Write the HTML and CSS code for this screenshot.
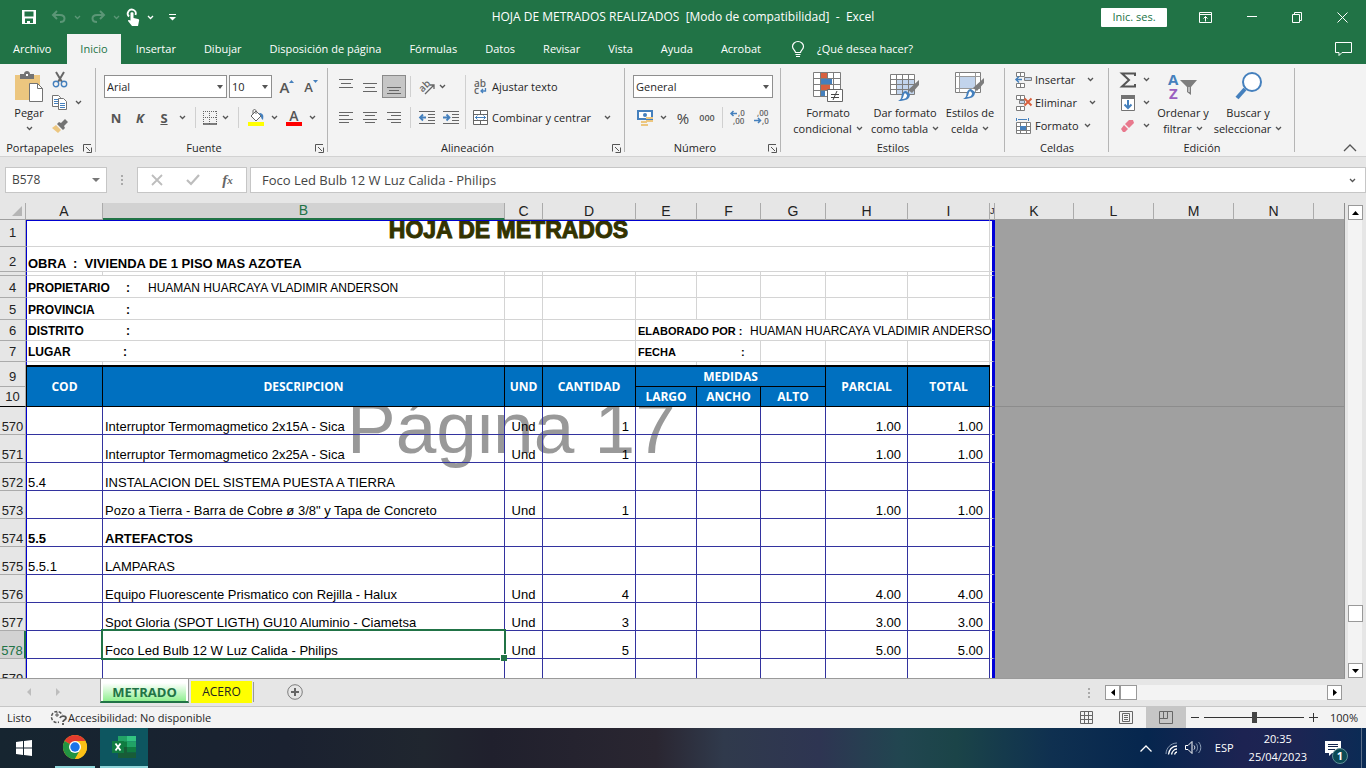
FILE: index.html
```html
<!DOCTYPE html>
<html lang="es">
<head>
<meta charset="utf-8">
<title>HOJA DE METRADOS REALIZADOS - Excel</title>
<link rel="stylesheet" href="styles.css">
</head>
<body>
<svg class="defs" aria-hidden="true">
  <symbol id="chev" viewBox="0 0 7 5"><path d="M1 1l2.500 2.500L6 1" fill="none" stroke="currentColor" stroke-width="1.300"/></symbol>
  <symbol id="launch" viewBox="0 0 9 9"><path d="M.5 7.500V.5H8M3 3l4 4M8.500 3.500v5H3.500" fill="none" stroke="#555"/></symbol>
  <symbol id="brush" viewBox="0 0 22 22"><path d="M22 0v5l-7 8-4-3z" fill="#7d7d7d"/><path d="M9 11l4 3c0 5-4 7-12 7 4-2 3-4 4-7 1-2 2-3 4-3z" fill="#4580bd"/><path d="M8 13c-2 2-1 4-3 6 3 0 5-1 5-4z" fill="#fff"/></symbol>
</svg>
<div class="app">
  <header class="titlebar">
    <div class="quick">
      <button aria-label="Guardar"><svg width="14" height="14" viewBox="0 0 14 14"><path d="M0 0h14v14H0z" fill="#fff"/><path d="M2.500 1.500h9v5h-9zM3 8.500h8V13H8v-2H5v2H3z" fill="#217346"/></svg></button>
      <button class="dim undo" aria-label="Deshacer"><svg width="16" height="14" viewBox="0 0 16 14"><path d="M6 1L2 5l4 4M2 5h7c6 0 6 7 0 7" fill="none" stroke="currentColor" stroke-width="2"/></svg></button>
      <svg class="ch dim"><use href="#chev"/></svg>
      <button class="dim next" aria-label="Rehacer"><svg width="16" height="14" viewBox="0 0 16 14"><path d="M10 1l4 4-4 4M14 5H7c-6 0-6 7 0 7" fill="none" stroke="currentColor" stroke-width="2"/></svg></button>
      <svg class="ch dim"><use href="#chev"/></svg>
      <button aria-label="Modo táctil"><svg width="13" height="17" viewBox="0 0 13 17"><path d="M2 7.500A4 4 0 1 1 8.500 6" fill="none" stroke="#fff" stroke-width="1.800"/><path d="M3.500 4c0-1 3-1 3 0v5l4.500 1c1 0 1.500 1 1 2l-1 5H5L1 12c0-1 1-1.500 2.500-.5z" fill="#fff"/></svg></button>
      <svg class="ch"><use href="#chev"/></svg>
      <button class="undo" aria-label="Personalizar"><svg width="7" height="7" viewBox="0 0 7 7"><path d="M0 .5h7" stroke="#fff"/><path d="M0 3h7L3.500 6.500z" fill="#fff"/></svg></button>
    </div>
    <h1>HOJA DE METRADOS REALIZADOS&nbsp; [Modo de compatibilidad]&nbsp; -&nbsp; Excel</h1>
    <div class="window">
      <button class="login">Inic. ses.</button>
      <button aria-label="Opciones de cinta"><svg width="13" height="11" viewBox="0 0 13 11"><path d="M.5.5h12v10H.5zM.5 2.500h12M6.500 9.500V4.500M4.500 6.500l2-2 2 2" fill="none" stroke="#fff"/></svg></button>
      <button aria-label="Minimizar"><svg width="10" height="11" viewBox="0 0 10 11"><path d="M0 4.500h10" stroke="#fff"/></svg></button>
      <button aria-label="Restaurar"><svg width="10" height="11" viewBox="0 0 10 11"><path d="M.5 2.500h7v8h-7zM2.500 2.500v-2h7v8h-2" fill="none" stroke="#fff"/></svg></button>
      <button aria-label="Cerrar"><svg width="11" height="11" viewBox="0 0 11 11"><path d="M.5.5l10 10M10.500.5l-10 10" stroke="#fff"/></svg></button>
    </div>
  </header>

  <nav class="tabs">
    <button>Archivo</button><button class="on">Inicio</button><button>Insertar</button><button>Dibujar</button><button>Disposición de página</button><button>Fórmulas</button><button>Datos</button><button>Revisar</button><button>Vista</button><button>Ayuda</button><button>Acrobat</button>
    <button class="tell"><svg width="12" height="17" viewBox="0 0 12 17"><path d="M3.500 11.500c0-2-3-3-3-6a5.500 5 0 0 1 11 0c0 3-3 4-3 6zM3.500 13.500h5M4 15.500h4" fill="none" stroke="#fff" stroke-width="1.200"/></svg>¿Qué desea hacer?</button>
    <button class="comment" aria-label="Comentarios"><svg width="17" height="15" viewBox="0 0 17 15"><path d="M.5.500h16v10H7l-3 3v-3H.5z" fill="none" stroke="#fff"/></svg></button>
  </nav>

  <section class="ribbon">
    <div class="group g-clip">
      <div class="body">
        <button class="big paste"><svg width="30" height="32" viewBox="0 0 30 32"><path d="M1 4h25v25H1z" fill="#ecc67f"/><path d="M6 3h4c0-4 6-4 6 0h4v5H6z" fill="#737373"/><path d="M12 3h2v2h-2z" fill="#fff"/><path d="M15.500 12.500h8l5 5v13h-13z" fill="#fff" stroke="#737373"/><path d="M23.500 12.500v5h5" fill="none" stroke="#737373"/></svg><span>Pegar</span><svg class="ch"><use href="#chev"/></svg></button>
        <div class="stack">
          <button class="line" aria-label="Cortar"><svg width="16" height="16" viewBox="0 0 16 16"><path d="M4 0l6 10M12 0L6 10" stroke="#666" stroke-width="2"/><circle cx="4" cy="12" r="2.700" fill="none" stroke="#4580bd" stroke-width="1.400"/><circle cx="12" cy="12" r="2.700" fill="none" stroke="#4580bd" stroke-width="1.400"/></svg></button>
          <button class="line" aria-label="Copiar"><svg width="16" height="16" viewBox="0 0 16 16"><path d="M.5.500h6l2 2v9h-8z" fill="#fff" stroke="#737373"/><path d="M2 4.500h4M2 6.500h4M2 8.500h4" stroke="#4580bd"/><path d="M6.500 3.500h5l3 3v8h-8z" fill="#fff" stroke="#737373"/><path d="M8 8.500h5M8 10.500h5M8 12.500h5" stroke="#4580bd"/></svg><svg class="ch"><use href="#chev"/></svg></button>
          <button class="line" aria-label="Copiar formato"><svg width="16" height="14" viewBox="0 0 16 14"><path d="M13 0l3 3-4 4 1 2-2 2-6-6 2-2 2 1z" fill="#737373"/><path d="M4 6l5 5-3 3-6-5z" fill="#ecc67f"/></svg></button>
        </div>
      </div>
      <div class="cap"><span>Portapapeles</span><svg class="ln"><use href="#launch"/></svg></div>
    </div>

    <div class="group g-font">
      <div class="rows">
        <div class="row">
          <label class="combo c-face"><select aria-label="Fuente"><option>Arial</option></select></label>
          <label class="combo c-size"><select aria-label="Tamaño"><option>10</option></select></label>
          <button class="b24 gl" aria-label="Aumentar"><span class="a16">A</span><svg class="tri" viewBox="0 0 5 3"><path d="M0 3h5L2.500 0z" fill="#4580bd"/></svg></button>
          <button class="b24 gl" aria-label="Disminuir"><span class="a13">A</span><svg class="tri" viewBox="0 0 5 3"><path d="M0 0h5L2.500 3z" fill="#4580bd"/></svg></button>
        </div>
        <div class="row">
          <button class="b24 bold">N</button><button class="b24 bold ital">K</button><button class="b24 bold und">S</button><svg class="ch wide"><use href="#chev"/></svg>
          <i class="sep"></i>
          <button class="b18" aria-label="Bordes"><svg width="14" height="14" viewBox="0 0 14 14"><path d="M0 .5h14M0 6.500h14M.5 0v13M6.500 0v13M13.500 0v13" stroke="#666" stroke-dasharray="1 1"/><path d="M0 13h14" stroke="#555" stroke-width="1.500"/></svg></button><svg class="ch wide"><use href="#chev"/></svg>
          <i class="sep"></i>
          <button class="b24" aria-label="Relleno"><svg width="17" height="17" viewBox="0 0 17 17"><path d="M3 7l5-5 5 5-5 5z" fill="#fff" stroke="#666"/><path d="M5 5V2c0-2 3-2 3 0v3" fill="none" stroke="#666"/><path d="M11 4c4 0 5 2 4 7-2-1-2-3-2-4z" fill="#4580bd"/><path d="M0 13h16v4H0z" fill="#ff0"/></svg></button><svg class="ch wide"><use href="#chev"/></svg>
          <button class="b24 fontcolor" aria-label="Color de fuente">A</button><svg class="ch wide"><use href="#chev"/></svg>
        </div>
      </div>
      <div class="cap"><span>Fuente</span><svg class="ln"><use href="#launch"/></svg></div>
    </div>

    <div class="group g-align">
      <div class="body">
        <div class="rows">
          <div class="row">
            <button class="b24" aria-label="Arriba"><svg width="14" height="16" viewBox="0 0 14 16"><path d="M0 .500h14M2 4.500h10M0 8.500h14" stroke="#666"/></svg></button>
            <button class="b24" aria-label="Medio"><svg width="14" height="16" viewBox="0 0 14 16"><path d="M0 4.500h14M2 8.500h10M0 12.500h14" stroke="#666"/></svg></button>
            <button class="b24 sel" aria-label="Abajo"><svg width="14" height="16" viewBox="0 0 14 16"><path d="M0 8.500h14M2 11.500h10M0 14.500h14" stroke="#666"/></svg></button>
            <i class="sep narrow"></i>
            <button class="b24" aria-label="Orientación"><svg width="16" height="16" viewBox="0 0 16 16"><text x="0" y="11" transform="rotate(-45 5 8)" class="ic ic10">ab</text><path d="M6 15L15 6M11 6h4v4" fill="none" stroke="#666" stroke-width="1.300"/></svg></button><svg class="ch"><use href="#chev"/></svg>
          </div>
          <div class="row">
            <button class="b24" aria-label="Izquierda"><svg width="14" height="12" viewBox="0 0 14 12"><path d="M0 .5h14M0 3.500h10M0 7.500h14M0 10.500h10" stroke="#666"/></svg></button>
            <button class="b24" aria-label="Centro"><svg width="14" height="12" viewBox="0 0 14 12"><path d="M0 .5h14M2 3.500h10M0 7.500h14M2 10.500h10" stroke="#666"/></svg></button>
            <button class="b24" aria-label="Derecha"><svg width="14" height="12" viewBox="0 0 14 12"><path d="M0 .5h14M4 3.500h10M0 7.500h14M4 10.500h10" stroke="#666"/></svg></button>
            <i class="sep narrow"></i>
            <button class="b24" aria-label="Disminuir sangría"><svg width="16" height="13" viewBox="0 0 16 13"><path d="M0 .5h16M9 3.500h7M9 6.500h7M9 9.500h7M0 12.500h16" stroke="#666"/><path d="M7 6.500H1M4 3.500l-3 3 3 3" fill="none" stroke="#4580bd" stroke-width="1.800"/></svg></button>
            <button class="b24" aria-label="Aumentar sangría"><svg width="16" height="13" viewBox="0 0 16 13"><path d="M0 .5h16M9 3.500h7M9 6.500h7M9 9.500h7M0 12.500h16" stroke="#666"/><path d="M0 6.500h6M3.500 3.500l3 3-3 3" fill="none" stroke="#4580bd" stroke-width="1.800"/></svg></button>
          </div>
        </div>
        <i class="sep tall"></i>
        <div class="rows">
          <div class="row"><button class="txt"><svg width="15" height="16" viewBox="-1 0 15 16"><text x="0" y="8" class="ic ic10">ab</text><text x="0" y="15" class="ic ic10">c</text><path d="M11.500 9v3H7M9 10l-2 2 2 2" fill="none" stroke="#4580bd" stroke-width="1.300"/></svg>Ajustar texto</button></div>
          <div class="row"><button class="txt"><svg width="15" height="15" viewBox="0 0 15 15"><path d="M.5.5h14v14H.5zM.5 4.500h14M.5 10.500h14M7.500.5v4M7.500 10.500v4" fill="#fff" stroke="#666"/><path d="M2 7.500h11M4.500 5.500l-2 2 2 2M10.500 5.500l2 2-2 2" fill="none" stroke="#4580bd"/></svg>Combinar y centrar</button><svg class="ch far"><use href="#chev"/></svg></div>
        </div>
      </div>
      <div class="cap"><span>Alineación</span><svg class="ln"><use href="#launch"/></svg></div>
    </div>

    <div class="group g-num">
      <div class="rows">
        <div class="row"><label class="combo c-num"><select aria-label="Formato de número"><option>General</option></select></label></div>
        <div class="row">
          <button class="b24" aria-label="Contabilidad"><svg width="16" height="16" viewBox="0 0 16 16"><path d="M1 1h14v8H1z" fill="#fff" stroke="#4580bd" stroke-width="2"/><circle cx="8" cy="5" r="2" fill="#4580bd"/><path d="M9 7h7v2H9zM9 10h7v2H9zM4 11h6v2H4zM4 14h7v2H4z" fill="#ecc67f"/></svg></button><svg class="ch wide"><use href="#chev"/></svg>
          <button class="b24 pct">%</button><button class="b24 mil">000</button>
          <i class="sep tight"></i>
          <button class="b24" aria-label="Aumentar decimales"><svg width="16" height="15" viewBox="0 0 16 15"><text x="8" y="6" class="ic ic8">,0</text><text x="3" y="14" class="ic ic8">,00</text><path d="M7 3.500H1M3.500 1L1 3.500 3.500 6" fill="none" stroke="#4580bd" stroke-width="1.500"/></svg></button>
          <button class="b24" aria-label="Disminuir decimales"><svg width="16" height="15" viewBox="0 0 16 15"><text x="3" y="6" class="ic ic8">,00</text><text x="8" y="14" class="ic ic8">,0</text><path d="M0 10.500h6M4 8l2.500 2.500L4 13" fill="none" stroke="#4580bd" stroke-width="1.500"/></svg></button>
        </div>
      </div>
      <div class="cap"><span>Número</span><svg class="ln"><use href="#launch"/></svg></div>
    </div>

    <div class="group g-style">
      <div class="body">
        <button class="big"><svg width="30" height="32" viewBox="0 0 30 32"><path d="M.5 1.500h27v24H.5z" fill="#fff"/><path d="M8 2h6v5H8zM8 14h9v5H8z" fill="#d8603f"/><path d="M8 8h11v5H8zM8 20h4v5H8z" fill="#4580bd"/><path d="M.5 1.500h27v24H.5zM.5 7.500h27M.5 13.500h27M.5 19.500h27M7.500 1.500v24M14.500 1.500v6M20.500 1.500v24" fill="none" stroke="#7d7d7d"/><path d="M14.500 18.500h15v12h-15z" fill="#fff" stroke="#666"/><path d="M18 23.500h8M18 26.500h8M24 20l-4 9" stroke="#444" fill="none"/></svg><span>Formato<br>condicional<svg class="ch"><use href="#chev"/></svg></span></button>
        <button class="big b-tab"><svg width="30" height="32" viewBox="0 0 30 32"><path d="M.5 3.500h24v20H.5z" fill="#fff"/><path d="M7 9h17v14H7z" fill="#c2d4ec"/><path d="M.5 3.500h24v20H.5zM.5 8.500h24M.5 13.500h24M.5 18.500h24M6.500 3.500v20M12.500 3.500v20M18.500 3.500v20" fill="none" stroke="#7d7d7d"/><use href="#brush" x="7" y="9" width="22" height="22"/></svg><span>Dar formato<br>como tabla<svg class="ch"><use href="#chev"/></svg></span></button>
        <button class="big b-cell"><svg width="30" height="32" viewBox="0 0 30 32"><path d="M.5 1.500h25v20H.5z" fill="#fff" stroke="#7d7d7d"/><path d="M5 6h15v11H5z" fill="#c2d4ec"/><path d="M.5 5.500h25M.5 17.500h25M4.500 1.500v20M20.500 1.500v20" stroke="#999"/><use href="#brush" x="7" y="7" width="22" height="22"/></svg><span>Estilos de<br>celda<svg class="ch"><use href="#chev"/></svg></span></button>
      </div>
      <div class="cap"><span>Estilos</span></div>
    </div>

    <div class="group g-cells">
      <div class="stack">
        <button class="line"><svg width="16" height="16" viewBox="0 0 16 16"><path d="M.5.5h8v4h-8zM4.500.5v4M.5 11.500h8v4h-8zM4.500 11.500v4" fill="#fff" stroke="#7d7d7d"/><path d="M8.500 5.500h7v3h-7z" fill="#c2d4ec" stroke="#7d7d7d"/><path d="M6 7.500H0M3 4.500l-3 3 3 3" fill="none" stroke="#4580bd" stroke-width="1.500"/></svg><span>Insertar</span><svg class="ch"><use href="#chev"/></svg></button>
        <button class="line"><svg width="16" height="16" viewBox="0 0 16 16"><path d="M.5.5h8v4h-8zM4.500.5v4M.5 11.500h8v4h-8zM4.500 11.500v4" fill="#fff" stroke="#7d7d7d"/><path d="M3.500 5.500h5v3h-5z" fill="#c2d4ec" stroke="#7d7d7d"/><path d="M8.500 3.500l7 7M15.500 3.500l-7 7" stroke="#d8603f" stroke-width="2"/></svg><span>Eliminar</span><svg class="ch"><use href="#chev"/></svg></button>
        <button class="line close"><svg width="16" height="16" viewBox="0 0 16 16"><path d="M.5 0v3M12.500 0v3M2 1.500h9" stroke="#4580bd"/><path d="M.5 4.500h14v11H.5zM.5 8.500h14M.5 12.500h14M4.500 4.500v11M10.500 4.500v11" fill="#fff" stroke="#7d7d7d"/><path d="M4 8h6v4H4z" fill="#4580bd"/></svg><span>Formato</span><svg class="ch"><use href="#chev"/></svg></button>
      </div>
      <div class="cap"><span>Celdas</span></div>
    </div>

    <div class="group g-edit">
      <div class="body">
        <div class="stack">
          <button class="line" aria-label="Autosuma"><svg width="16" height="16" viewBox="0 0 16 16"><path d="M15 4V1.500H2L9 8l-7 6.500h13V12" fill="none" stroke="#555" stroke-width="2"/></svg><svg class="ch"><use href="#chev"/></svg></button>
          <button class="line" aria-label="Rellenar"><svg width="16" height="16" viewBox="0 0 16 16"><path d="M1.500.5h13v15h-13z" fill="#fff" stroke="#737373"/><path d="M1 0h14v4H1z" fill="#737373"/><path d="M8 5v8M4.500 9.500L8 13l3.500-3.500" fill="none" stroke="#4580bd" stroke-width="2"/></svg><svg class="ch"><use href="#chev"/></svg></button>
          <button class="line" aria-label="Borrar"><svg width="16" height="12" viewBox="0 0 16 12"><path d="M9 0h4l1 3-5 5-4-4z" fill="#e8798d"/><path d="M4 5l4 4-3 3H3L1 9z" fill="#e8798d"/></svg><svg class="ch"><use href="#chev"/></svg></button>
        </div>
        <button class="big b-sort"><svg width="30" height="32" viewBox="0 0 30 32"><text x="0" y="14" class="ic az blue">A</text><text x="1" y="28" class="ic az violet">Z</text><path d="M12 9h17l-6 7v8l-4-3v-5z" fill="#7d7d7d"/><path d="M21 16v5" stroke="#fff"/></svg><span>Ordenar y<br>filtrar<svg class="ch"><use href="#chev"/></svg></span></button>
        <button class="big b-find"><svg width="30" height="32" viewBox="0 0 30 32"><circle cx="19" cy="11" r="9" fill="#fff" stroke="#4580bd" stroke-width="2"/><path d="M12 18l-8 9" stroke="#4580bd" stroke-width="4"/></svg><span>Buscar y<br>seleccionar<svg class="ch"><use href="#chev"/></svg></span></button>
      </div>
      <div class="cap"><span>Edición</span></div>
    </div>
    <button class="collapse" aria-label="Contraer"><svg width="14" height="8" viewBox="0 0 14 8"><path d="M1 7l6-6 6 6" fill="none" stroke="#555" stroke-width="1.300"/></svg></button>
  </section>

  <section class="formula">
    <label class="namebox"><input value="B578" aria-label="Cuadro de nombres"></label>
    <i class="dots"></i>
    <div class="fx">
      <button aria-label="Cancelar"><svg width="12" height="12" viewBox="0 0 12 12"><path d="M1 1l10 10M11 1L1 11" stroke="#bdbdbd" stroke-width="1.800"/></svg></button>
      <button aria-label="Aceptar"><svg width="14" height="12" viewBox="0 0 14 12"><path d="M1 6l4 4 8-9" fill="none" stroke="#bdbdbd" stroke-width="2.200"/></svg></button>
      <button class="fn">f<small>x</small></button>
    </div>
    <label class="entry"><input value="Foco Led Bulb 12 W Luz Calida - Philips" aria-label="Fórmula"><svg class="ch"><use href="#chev"/></svg></label>
  </section>

  <main class="work">
    <div class="sheet">
      <div class="watermark">Página 17</div>
      <table>
        <colgroup><col class="k0"><col class="kA"><col class="kB"><col class="kC"><col class="kD"><col class="kE"><col class="kF"><col class="kG"><col class="kH"><col class="kH"><col class="kJ"><col class="kK"><col class="kL"><col class="kL"><col class="kL"><col></colgroup>
        <thead><tr class="letters"><th class="corner"></th><th>A</th><th class="cur">B</th><th>C</th><th>D</th><th>E</th><th>F</th><th>G</th><th>H</th><th>I</th><th class="j">J</th><th>K</th><th>L</th><th>M</th><th>N</th><th class="last"></th></tr></thead>
        <tbody class="top">
          <tr class="h27 first"><th>1</th><td colspan="9" class="title">HOJA DE METRADOS</td><td></td><td class="out" colspan="5"></td></tr>
          <tr class="h25"><th>2</th><td colspan="9" class="b obra">OBRA &nbsp;:&nbsp; VIVIENDA DE 1 PISO MAS AZOTEA</td><td></td><td class="out" colspan="5"></td></tr>
          <tr class="h4"><th></th><td></td><td></td><td></td><td></td><td></td><td></td><td></td><td></td><td></td><td></td><td class="out" colspan="5"></td></tr>
          <tr class="h22"><th>4</th><td colspan="2"><div class="field"><b>PROPIETARIO</b><b>:</b><span>HUAMAN HUARCAYA VLADIMIR ANDERSON</span></div></td><td></td><td></td><td></td><td></td><td></td><td></td><td></td><td></td><td class="out" colspan="5"></td></tr>
          <tr class="h22"><th>5</th><td colspan="2"><div class="field"><b>PROVINCIA</b><b>:</b></div></td><td></td><td></td><td></td><td></td><td></td><td></td><td></td><td></td><td class="out" colspan="5"></td></tr>
          <tr class="h21"><th>6</th><td colspan="2"><div class="field"><b>DISTRITO</b><b>:</b></div></td><td></td><td></td><td colspan="6"><div class="made"><b>ELABORADO POR :</b><span>HUAMAN HUARCAYA VLADIMIR ANDERSON</span></div></td><td class="out" colspan="5"></td></tr>
          <tr class="h21"><th>7</th><td colspan="2"><div class="field near"><b>LUGAR</b><b>:</b></div></td><td></td><td></td><td colspan="2"><div class="made"><b>FECHA</b><b>:</b></div></td><td></td><td></td><td></td><td></td><td class="out" colspan="5"></td></tr>
          <tr class="h3"><th></th><td></td><td></td><td></td><td></td><td></td><td></td><td></td><td></td><td></td><td></td><td class="out" colspan="5"></td></tr>
          <tr class="h22 head r9"><th>9</th><td rowspan="2">COD</td><td rowspan="2">DESCRIPCION</td><td rowspan="2">UND</td><td rowspan="2">CANTIDAD</td><td colspan="3" class="med">MEDIDAS</td><td rowspan="2">PARCIAL</td><td rowspan="2">TOTAL</td><td class="plain"></td><td class="out" colspan="5"></td></tr>
          <tr class="h20 head r10"><th>10</th><td>LARGO</td><td>ANCHO</td><td>ALTO</td><td class="plain"></td><td class="out" colspan="5"></td></tr>
        </tbody>
        <tbody class="data">
          <tr><th>570</th><td></td><td>Interruptor Termomagmetico 2x15A - Sica</td><td>Und</td><td>1</td><td></td><td></td><td></td><td>1.00</td><td>1.00</td><td></td><td class="out" colspan="5"></td></tr>
          <tr><th>571</th><td></td><td>Interruptor Termomagmetico 2x25A - Sica</td><td>Und</td><td>1</td><td></td><td></td><td></td><td>1.00</td><td>1.00</td><td></td><td class="out" colspan="5"></td></tr>
          <tr><th>572</th><td>5.4</td><td>INSTALACION DEL SISTEMA PUESTA A TIERRA</td><td></td><td></td><td></td><td></td><td></td><td></td><td></td><td></td><td class="out" colspan="5"></td></tr>
          <tr><th>573</th><td></td><td>Pozo a Tierra - Barra de Cobre ø 3/8" y Tapa de Concreto</td><td>Und</td><td>1</td><td></td><td></td><td></td><td>1.00</td><td>1.00</td><td></td><td class="out" colspan="5"></td></tr>
          <tr class="b"><th>574</th><td>5.5</td><td>ARTEFACTOS</td><td></td><td></td><td></td><td></td><td></td><td></td><td></td><td></td><td class="out" colspan="5"></td></tr>
          <tr><th>575</th><td>5.5.1</td><td>LAMPARAS</td><td></td><td></td><td></td><td></td><td></td><td></td><td></td><td></td><td class="out" colspan="5"></td></tr>
          <tr><th>576</th><td></td><td>Equipo Fluorescente Prismatico con Rejilla - Halux</td><td>Und</td><td>4</td><td></td><td></td><td></td><td>4.00</td><td>4.00</td><td></td><td class="out" colspan="5"></td></tr>
          <tr><th>577</th><td></td><td>Spot Gloria (SPOT LIGTH) GU10 Aluminio - Ciametsa</td><td>Und</td><td>3</td><td></td><td></td><td></td><td>3.00</td><td>3.00</td><td></td><td class="out" colspan="5"></td></tr>
          <tr class="active"><th>578</th><td></td><td class="cell">Foco Led Bulb 12 W Luz Calida - Philips</td><td>Und</td><td>5</td><td></td><td></td><td></td><td>5.00</td><td>5.00</td><td></td><td class="out" colspan="5"></td></tr>
          <tr><th>579</th><td></td><td></td><td></td><td></td><td></td><td></td><td></td><td></td><td></td><td></td><td class="out" colspan="5"></td></tr>
        </tbody>
      </table>
    </div>
    <div class="vscroll">
      <button aria-label="Subir"><svg width="7" height="4" viewBox="0 0 7 4"><path d="M0 4h7L3.500 0z"/></svg></button>
      <div class="track"><i class="thumb"></i></div>
      <button aria-label="Bajar"><svg width="7" height="4" viewBox="0 0 7 4"><path d="M0 0h7L3.500 4z"/></svg></button>
    </div>
  </main>

  <div class="sheets">
    <div class="arrows"><svg width="4" height="8" viewBox="0 0 4 8"><path d="M4 0v8L0 4z" fill="#bdbdbd"/></svg><svg width="4" height="8" viewBox="0 0 4 8"><path d="M0 0v8l4-4z" fill="#bdbdbd"/></svg></div>
    <button class="tab-on"><span>METRADO</span></button>
    <button class="tab-y">ACERO</button>
    <i class="bar"></i>
    <button class="add" aria-label="Hoja nueva"><svg width="16" height="16" viewBox="0 0 16 16"><circle cx="8" cy="8" r="7.300" fill="none" stroke="#7d7d7d"/><path d="M8 4v8M4 8h8" stroke="#666" stroke-width="2"/></svg></button>
    <i class="dots push"></i>
    <div class="hscroll">
      <button aria-label="Izquierda"><svg width="4" height="7" viewBox="0 0 4 7"><path d="M4 0v7L0 3.500z"/></svg></button><i class="thumb"></i><span class="track"></span><button aria-label="Derecha"><svg width="4" height="7" viewBox="0 0 4 7"><path d="M0 0v7l4-3.500z"/></svg></button>
    </div>
  </div>

  <footer class="status">
    <span class="ready">Listo</span>
    <button class="acc"><svg width="17" height="15" viewBox="0 0 17 15"><circle cx="7" cy="7" r="5.500" fill="none" stroke="#555" stroke-width="1.500" stroke-dasharray="3 1.500"/><path d="M7 2v5M5 5h4" stroke="#555"/><path d="M9 5h8v10H9z" fill="#f3f3f3"/><path d="M10 8c1-3 6-2 6 0s-3 2-3 4M13 13v2" fill="none" stroke="#555" stroke-width="1.800"/></svg>Accesibilidad: No disponible</button>
    <div class="views">
      <button aria-label="Normal"><svg width="13" height="13" viewBox="0 0 13 13"><path d="M.5.5h12v12H.5zM.5 4.500h12M.5 8.500h12M4.500.5v12M8.500.5v12" fill="none" stroke="#666"/></svg></button>
      <button aria-label="Diseño de página"><svg width="14" height="13" viewBox="0 0 14 13"><path d="M.5.5h13v12H.5zM3.500 2.500h7v8h-7zM5 4.500h4M5 6.500h4M5 8.500h4" fill="none" stroke="#666"/></svg></button>
      <button class="on" aria-label="Saltos de página"><svg width="14" height="13" viewBox="0 0 14 13"><path d="M.5.5h13v12H.5zM4.500.5v7M8.500.5v7M.5 7.500h8" fill="none" stroke="#666"/></svg></button>
    </div>
    <div class="zoom"><button aria-label="Alejar"><svg width="8" height="9" viewBox="0 0 8 9"><path d="M0 4.500h8" stroke="#333"/></svg></button><input type="range" min="0" max="100" value="50" aria-label="Zoom"><button aria-label="Acercar"><svg width="9" height="9" viewBox="0 0 9 9"><path d="M0 4.500h9M4.500 0v9" stroke="#333"/></svg></button></div>
    <span class="pc">100%</span>
  </footer>

  <div class="taskbar">
    <button class="start" aria-label="Inicio"><svg width="16" height="16" viewBox="0 0 16 16"><path d="M0 2l7-1v6.500H0zM8 1l8-1v7.500H8zM0 8.500h7V15l-7-1zM8 8.500h8V16l-8-1z" fill="#fff"/></svg></button>
    <button class="chrome" aria-label="Chrome"><svg width="24" height="24" viewBox="0 0 24 24"><circle cx="12" cy="12" r="12" fill="#fbc116"/><path d="M12 12L1.600 6A12 12 0 0 1 22.400 6z" fill="#e33b2e"/><path d="M12 12L1.600 6A12 12 0 0 0 12 24l5-9z" fill="#229342"/><path d="M12 6h10.400A12 12 0 0 1 12 24l5.200-9z" fill="#fbc116"/><circle cx="12" cy="12" r="6" fill="#fff"/><circle cx="12" cy="12" r="4.700" fill="#1a73e8"/></svg></button>
    <button class="excel" aria-label="Excel"><svg width="24" height="22" viewBox="0 0 24 22"><path d="M6 0h9v11H6z" fill="#21a366"/><path d="M15 0h9v5.500h-9z" fill="#33c481"/><path d="M15 5.500h9V11h-9z" fill="#21a366"/><path d="M6 5.500h9V11H6zM15 11h9v5.500h-9z" fill="#107c41"/><path d="M6 11h9v5.500h9V22H6z" fill="#185c37"/><path d="M0 5h12v12H0z" fill="#107c41"/><path d="M3.500 7.500l5 7M8.500 7.500l-5 7" stroke="#fff" stroke-width="1.800"/></svg></button>
    <div class="tray">
      <svg width="12" height="7" viewBox="0 0 12 7"><path d="M.5 6.500L6 1l5.500 5.500" fill="none" stroke="#fff" stroke-width="1.300"/></svg>
      <svg class="wifi" width="14" height="13" viewBox="0 0 14 13"><path d="M1 12C1 6 6 1 12 1" fill="none" stroke="#8b9db5"/><path d="M3.500 12.500C4 8 7 4 12 4M6.500 12.500C7 10 9 7 12 7M9.500 12.500C10 11 11 10 12 10" fill="none" stroke="#fff" stroke-width="1.300"/></svg>
      <svg width="17" height="14" viewBox="0 0 17 14"><path d="M.5 4.500H3l4-4v12l-4-4H.5z" fill="none" stroke="#fff"/><path d="M9 4.500c1 1 1 3 0 4" stroke="#fff" fill="none"/><path d="M11 2.500c2 2 2 6 0 8M13.500 1c3 3 3 8 0 11" stroke="#8b9db5" fill="none"/></svg>
      <span class="lang">ESP</span>
      <div class="clock"><span>20:35</span><span>25/04/2023</span></div>
      <div class="note"><svg width="16" height="15" viewBox="0 0 16 15"><path d="M0 0h16v12H7l-3 3v-3H0z" fill="#fff"/><path d="M3 3.500h10M3 5.500h10M3 8.500h7" stroke="#12264e"/></svg><b>1</b></div>
      <i class="edge"></i>
    </div>
  </div>
</div>
</body>
</html>
```
FILE: styles.css
```css
* { box-sizing: border-box; }
body { margin: 0; font: 11px/16px "Open Sans", "Noto Sans", sans-serif; color: #262626; }
button { border: 0; padding: 0; background: none; font: inherit; color: inherit; display: flex; align-items: center; justify-content: center; }
select, input { font: inherit; color: inherit; margin: 0; border-radius: 0; }
svg { display: block; flex: none; overflow: visible; }
i { display: block; flex: none; }
.defs { position: absolute; width: 0; height: 0; overflow: hidden; }
.app { height: 100vh; display: flex; flex-direction: column; overflow: hidden; }
.ch { width: 7px; height: 5px; color: #555; }
.ic { font-family: "Open Sans", sans-serif; font-weight: 600; fill: #666; }
.ic10 { font-size: 10px; }
.ic8 { font-size: 8px; }
.az { font-size: 15px; font-weight: 700; }
.blue { fill: #4580bd; }
.violet { fill: #9a5fbf; }

.titlebar { height: 34px; background: #217346; color: #fff; display: grid; grid-template-columns: 1fr auto 1fr; align-items: center; flex: none; }
.titlebar h1 { margin: 0; font-size: 12px; font-weight: 400; }
.quick { display: flex; align-items: center; gap: 7px; padding-left: 22px; }
.quick .undo { margin-left: 8px; }
.quick .next { margin-left: 2px; }
.quick .ch { color: #fff; }
.quick .dim { color: #5b9676; }
.window { display: flex; justify-content: flex-end; align-items: center; padding-right: 18px; gap: 35px; }
.login { background: #fff; color: #217346; width: 66px; height: 19px; margin-right: -3px; border-radius: 1px; }

.tabs { height: 30px; background: #217346; color: #fff; display: flex; flex: none; }
.tabs button { padding: 0 14px; }
.tabs button:first-child { padding-left: 13px; }
.tabs .on { background: #f3f3f3; color: #217346; padding: 0 13px; margin: 0 1px 0 2px; }
.tabs .tell { gap: 13px; margin-left: 3px; }
.tabs .comment { margin-left: auto; }

.ribbon { height: 93px; background: #f3f3f3; border-bottom: 1px solid #d2d2d2; display: flex; flex: none; position: relative; }
.group { display: flex; flex-direction: column; justify-content: space-between; padding-top: 4px; background: linear-gradient(#b5b5b5, #b5b5b5) right 4px / 1px calc(100% - 8px) no-repeat; flex: none; }
.body { display: flex; }
.cap { display: flex; justify-content: center; align-items: center; position: relative; height: 16px; }
.ln { position: absolute; right: 4px; width: 9px; height: 9px; }
.g-clip { width: 96px; }
.g-clip .cap { padding-right: 16px; }
.g-font { width: 232px; padding-left: 8px; }
.g-font .cap, .g-align .cap, .g-num .cap { padding-right: 24px; }
.g-align { width: 297px; padding-left: 6px; }
.g-num { width: 156px; padding-left: 8px; }
.g-style { width: 224px; }
.g-style .body { padding-left: 8px; }
.g-cells { width: 104px; }
.g-edit { width: 186px; }
.rows { display: flex; flex-direction: column; gap: 8px; padding-top: 7px; }
.row { display: flex; height: 23px; align-items: center; }
.stack { display: flex; flex-direction: column; }
.line { height: 23px; gap: 3px; padding-left: 11px; justify-content: flex-start; }
.g-cells .line .ch { margin-left: 9px; }
.g-cells .close .ch { margin-left: 2px; }
.g-edit .line .ch { margin-left: 4px; }
.g-clip .line { padding-left: 6px; gap: 7px; }
.big { flex-direction: column; width: 78px; height: 70px; justify-content: flex-start; padding-top: 3px; gap: 2px; }
.big .ch { display: inline-block; margin-left: 4px; vertical-align: 2px; }
.big.paste { width: 46px; padding-left: 12px; }
.big.paste .ch { margin: 3px 0 0; }
.b-tab { width: 76px; }
.b-cell { width: 54px; }
.b-sort { width: 58px; margin-left: 4px; }
.b-find { width: 72px; }
.b24 { width: 24px; height: 23px; }
.b18 { width: 18px; height: 23px; }
.ch.wide { margin: 0 4px 0 3px; }
.ch.far { margin-left: 13px; }
.sep { width: 1px; height: 21px; background: #d0d0d0; margin: 0 5px; }
.sep.narrow { margin: 0 4px; }
.sep.tight { margin: 0 3px; }
.sep.tall { height: 54px; margin: 7px 4px 0 2px; }
.sel { background: #c6c6c6; border: 1px solid #8a8a8a; }
.gl { color: #555; font-weight: 600; }
.gl .tri { width: 5px; height: 3px; align-self: flex-start; margin-top: 5px; }
.a16 { font-size: 15px; }
.a13 { font-size: 13px; }
.bold { font-weight: 700; font-size: 13px; color: #555; }
.ital { font-style: italic; }
.und { text-decoration: underline; }
.fontcolor { font-size: 14px; font-weight: 600; line-height: 13px; color: #555; width: 16px; height: 17px; border-bottom: 4px solid #f00; margin: 0 4px; }
.pct { font-size: 15px; color: #444; }
.mil { font-size: 9px; font-weight: 600; color: #555; }
.txt { gap: 4px; padding-left: 3px; }
.combo { position: relative; display: block; height: 23px; }
.combo::after { content: ""; position: absolute; right: 4px; top: 10px; border: 3px solid transparent; border-top: 4px solid #555; border-bottom: 0; pointer-events: none; }
.combo select { appearance: none; width: 100%; height: 23px; border: 1px solid #8f8f8f; background: #fff; padding: 0 2px; }
.c-face { width: 123px; margin-right: 2px; }
.c-size { width: 43px; margin-right: 3px; }
.c-num { width: 140px; }
.collapse { position: absolute; right: 9px; bottom: 4px; }

.formula { height: 46px; background: #e6e6e6; display: flex; align-items: flex-start; padding: 10px 0 0 5px; flex: none; font-size: 12px; color: #444; }
.namebox, .entry, .fx { height: 26px; background: #fff; border: 1px solid #c6c6c6; display: flex; align-items: center; }
.namebox { width: 102px; position: relative; }
.namebox::after { content: ""; position: absolute; right: 6px; top: 10px; border: 4px solid transparent; border-top-color: #777; border-bottom: 0; }
.formula input { border: 0; background: none; outline: 0; width: 100%; padding: 0 6px; }
.dots { width: 2px; height: 10px; margin: 8px 14px; background: repeating-linear-gradient(#aaa 0 2px, transparent 2px 4px); }
.fx { width: 110px; justify-content: space-around; padding: 0 2px; }
.fn { font: italic 700 15px "Liberation Serif", serif; color: #666; }
.fn small { font-size: 11px; }
.entry { flex: 1; margin-left: 3px; padding-right: 9px; }
.formula .entry input { padding: 0 11px; font-size: 13px; }

.work { flex: 1; min-height: 0; display: flex; background: #e6e6e6; }
.sheet { flex: 1; min-width: 0; overflow: hidden; position: relative; background: #fff; border-bottom: 1px solid #9a9a9a; border-right: 1px solid #8f8f8f; font: 13px/15px "Liberation Sans", Arial, sans-serif; color: #000; }
.watermark { position: absolute; left: 347px; top: 183px; font-size: 73px; line-height: 84px; color: #999; }
table { position: relative; width: 100%; table-layout: fixed; border-collapse: separate; border-spacing: 0; }
.k0 { width: 26px; } .kA { width: 77px; } .kB { width: 402px; } .kC { width: 38px; } .kD { width: 93px; }
.kE { width: 61px; } .kF { width: 64px; } .kG { width: 65px; } .kH { width: 82px; } .kJ { width: 5px; }
.kK { width: 79px; } .kL { width: 80px; }
th, td { padding: 0; border: 0 solid #d4d4d4; border-width: 0 1px 1px 0; white-space: nowrap; font-size: 13px; }
th { background: #e6e6e6; border-color: #ababab; font-weight: 400; color: #222; }
.letters th { height: 17px; line-height: 16px; border-bottom-color: #9f9f9f; font-size: 14px; }
.letters .cur { background: #d2d2d2; color: #217346; border-bottom: 2px solid #217346; line-height: 15px; }
.letters .j { overflow: hidden; font-size: 9px; }
.letters .last { border-right: 0; }
.corner { position: relative; }
.corner::after { content: ""; position: absolute; right: 3px; bottom: 3px; border: 5px solid transparent; border-right-color: #b5b5b5; border-bottom-color: #b5b5b5; }
tbody th { vertical-align: bottom; overflow: hidden; }
.top th { padding-bottom: 2px; }
.first th { vertical-align: middle; }
td { vertical-align: bottom; overflow: hidden; }
td:nth-child(2) { border-left: 1px solid #0000d0; padding-left: 1px; }
.out { background: #a0a0a0; border: 0; }
td:nth-last-child(2) { border-right: 3px solid #0000d8; }
.first td:not(.out) { border-top: 1px solid #0000d0; }
.h27 { height: 27px; } .h25 { height: 25px; } .h22 { height: 22px; } .h21 { height: 21px; } .h20 { height: 20px; }
.h4 { height: 4px; } .h3 { height: 3px; }
.h4 th, .h3 th, .h4 td, .h3 td { font-size: 0; line-height: 0; padding: 0; }
.h3 th, .h3 td { border-bottom: 0; }
.top td { font-size: 12px; }
.top .title { font: 700 23px/18px "Liberation Sans", Arial, sans-serif; -webkit-text-stroke: 1px #333300; color: #333300; text-align: center; vertical-align: top; }
.top .obra { font-size: 13px; }
.b td, td.b { font-weight: 700; }
.field { display: grid; grid-template-columns: 98px 22px auto; line-height: 18px; justify-content: start; }
.near { grid-template-columns: 95px auto; }
.made { display: grid; grid-template-columns: 103px auto; padding-left: 2px; line-height: 18px; justify-content: start; }
.made b { font-size: 11px; }
.made span { padding-left: 9px; }
.top .head td:not(.out):not(.plain) { background: #0070c0; color: #fff; font: 700 12px/16px "Open Sans", sans-serif; text-align: center; vertical-align: middle; border-color: #000; padding: 0; }
.r9 td:not(.out):not(.plain) { border-top: 2px solid #000; }
.r9 td:nth-child(2) { border-left: 1px solid #0000d0; }
.r10 td:nth-child(2) { border-left: 0; }
.r10 th, .r10 td:not(.out):not(.plain), .r9 td[rowspan] { border-bottom: 1px solid #000; }
.r10 .out, .r10 .plain { border-bottom: 1px solid #8c8c8c; }
.data tr { height: 28px; }
.data td:not(.out) { border-color: #33339f; }
.data td:nth-child(2):not(.out) { border-left-color: #0000d0; }
.data td:nth-last-child(2):not(.out) { border-right-color: #0000d8; border-bottom-color: #d4d4d4; }
.data td:nth-child(3) { padding-left: 2px; }
.data td:nth-child(4) { text-align: center; }
.data td:nth-child(5), .data td:nth-child(9), .data td:nth-child(10) { text-align: right; padding-right: 6px; }
.active th { background: #d2d2d2; color: #217346; border-right: 2px solid #217346; }
.active .cell { position: relative; overflow: visible; }
.active .cell::before { content: ""; position: absolute; inset: -2px; border: 2px solid #217346; }
.active .cell::after { content: ""; position: absolute; right: -3px; bottom: -3px; width: 6px; height: 6px; background: #217346; border: 1px solid #fff; border-width: 1px 0 0 1px; }

.vscroll { width: 21px; display: flex; flex-direction: column; padding: 2px 4px 1px 3px; }
.vscroll button, .hscroll button, .thumb { width: 15px; height: 15px; background: #fff; border: 1px solid #999; flex: none; }
.vscroll .track { flex: 1; background: #f3f3f3; display: flex; flex-direction: column; justify-content: flex-end; padding-bottom: 41px; }
.track .thumb { height: 17px; }
.sheets { height: 28px; background: #e6e6e6; border-bottom: 1px solid #c6c6c6; display: flex; flex: none; align-items: flex-start; font-size: 12px; }
.arrows { width: 100px; display: flex; gap: 25px; padding: 9px 0 0 27px; }
.tab-on { width: 89px; height: 24px; border: 1px solid #9a9a9a; border-top: 0; border-bottom: 2px solid #217346; background: #fff; padding: 0 2px; color: #217346; font-weight: 700; font-size: 13px; }
.tab-on span { flex: 1; height: 18px; line-height: 18px; margin-top: 3px; background: linear-gradient(#fff, #90f090); }
.tab-y { width: 61px; height: 22px; margin: 2px 1px 0 2px; background: #ff0; color: #222; }
.bar { width: 1px; height: 20px; margin-top: 3px; background: #999; }
.add { margin: 5px 0 0 33px; }
.push { margin: 9px 15px 0 auto; }
.hscroll { display: flex; width: 237px; margin: 6px 24px 0 0; }
.hscroll .thumb { width: 17px; }
.hscroll .track { flex: 1; background: #f3f3f3; height: 15px; }

.status { height: 21px; background: #f3f3f3; display: flex; align-items: center; flex: none; }
.ready { width: 50px; padding-left: 7px; }
.acc { gap: 1px; }
.views { display: flex; margin-left: auto; align-self: stretch; }
.views button { width: 40px; }
.views .on { background: #c6c6c6; }
.zoom { display: flex; align-items: center; gap: 5px; padding: 0 12px 0 5px; }
.zoom input { appearance: none; width: 100px; height: 12px; background: linear-gradient(#333, #333) center / 100% 1px no-repeat; }
.zoom input::-webkit-slider-thumb { appearance: none; width: 5px; height: 11px; background: #444; }
.pc { padding-right: 8px; }

.taskbar { height: 40px; flex: none; display: flex; align-items: stretch; color: #fff; background: linear-gradient(90deg, #162530 0, #1a2130 21%, #20262f 31%, #20202d 36%, #2a2631 48%, #303a4c 53%, #2e3552 60%, #214650 66%, #1b4448 70%, #0f3050 77%, #06264e 84%, #1d2352 91%, #1c2553 95%, #0a2b55 100%); }
.start { width: 48px; }
.chrome { width: 40px; margin: 0 5px 0 7px; border-bottom: 2px solid #8fd6da; }
.excel { width: 48px; background: #0d5660; border-bottom: 2px solid #8fd6da; }
.tray { margin-left: auto; display: flex; align-items: center; gap: 13px; }
.wifi { margin-right: -7px; }
.lang { margin-right: 2px; }
.clock { display: flex; flex-direction: column; align-items: center; line-height: 18px; }
.note { position: relative; margin: 0 7px 0 5px; }
.note b { position: absolute; left: 7px; top: 7px; width: 16px; height: 16px; line-height: 14px; border: 1px solid #5f8f96; border-radius: 50%; background: #0b4a55; text-align: center; }
.edge { width: 1px; align-self: stretch; background: #5b6f8a; margin-right: 4px; }
```
